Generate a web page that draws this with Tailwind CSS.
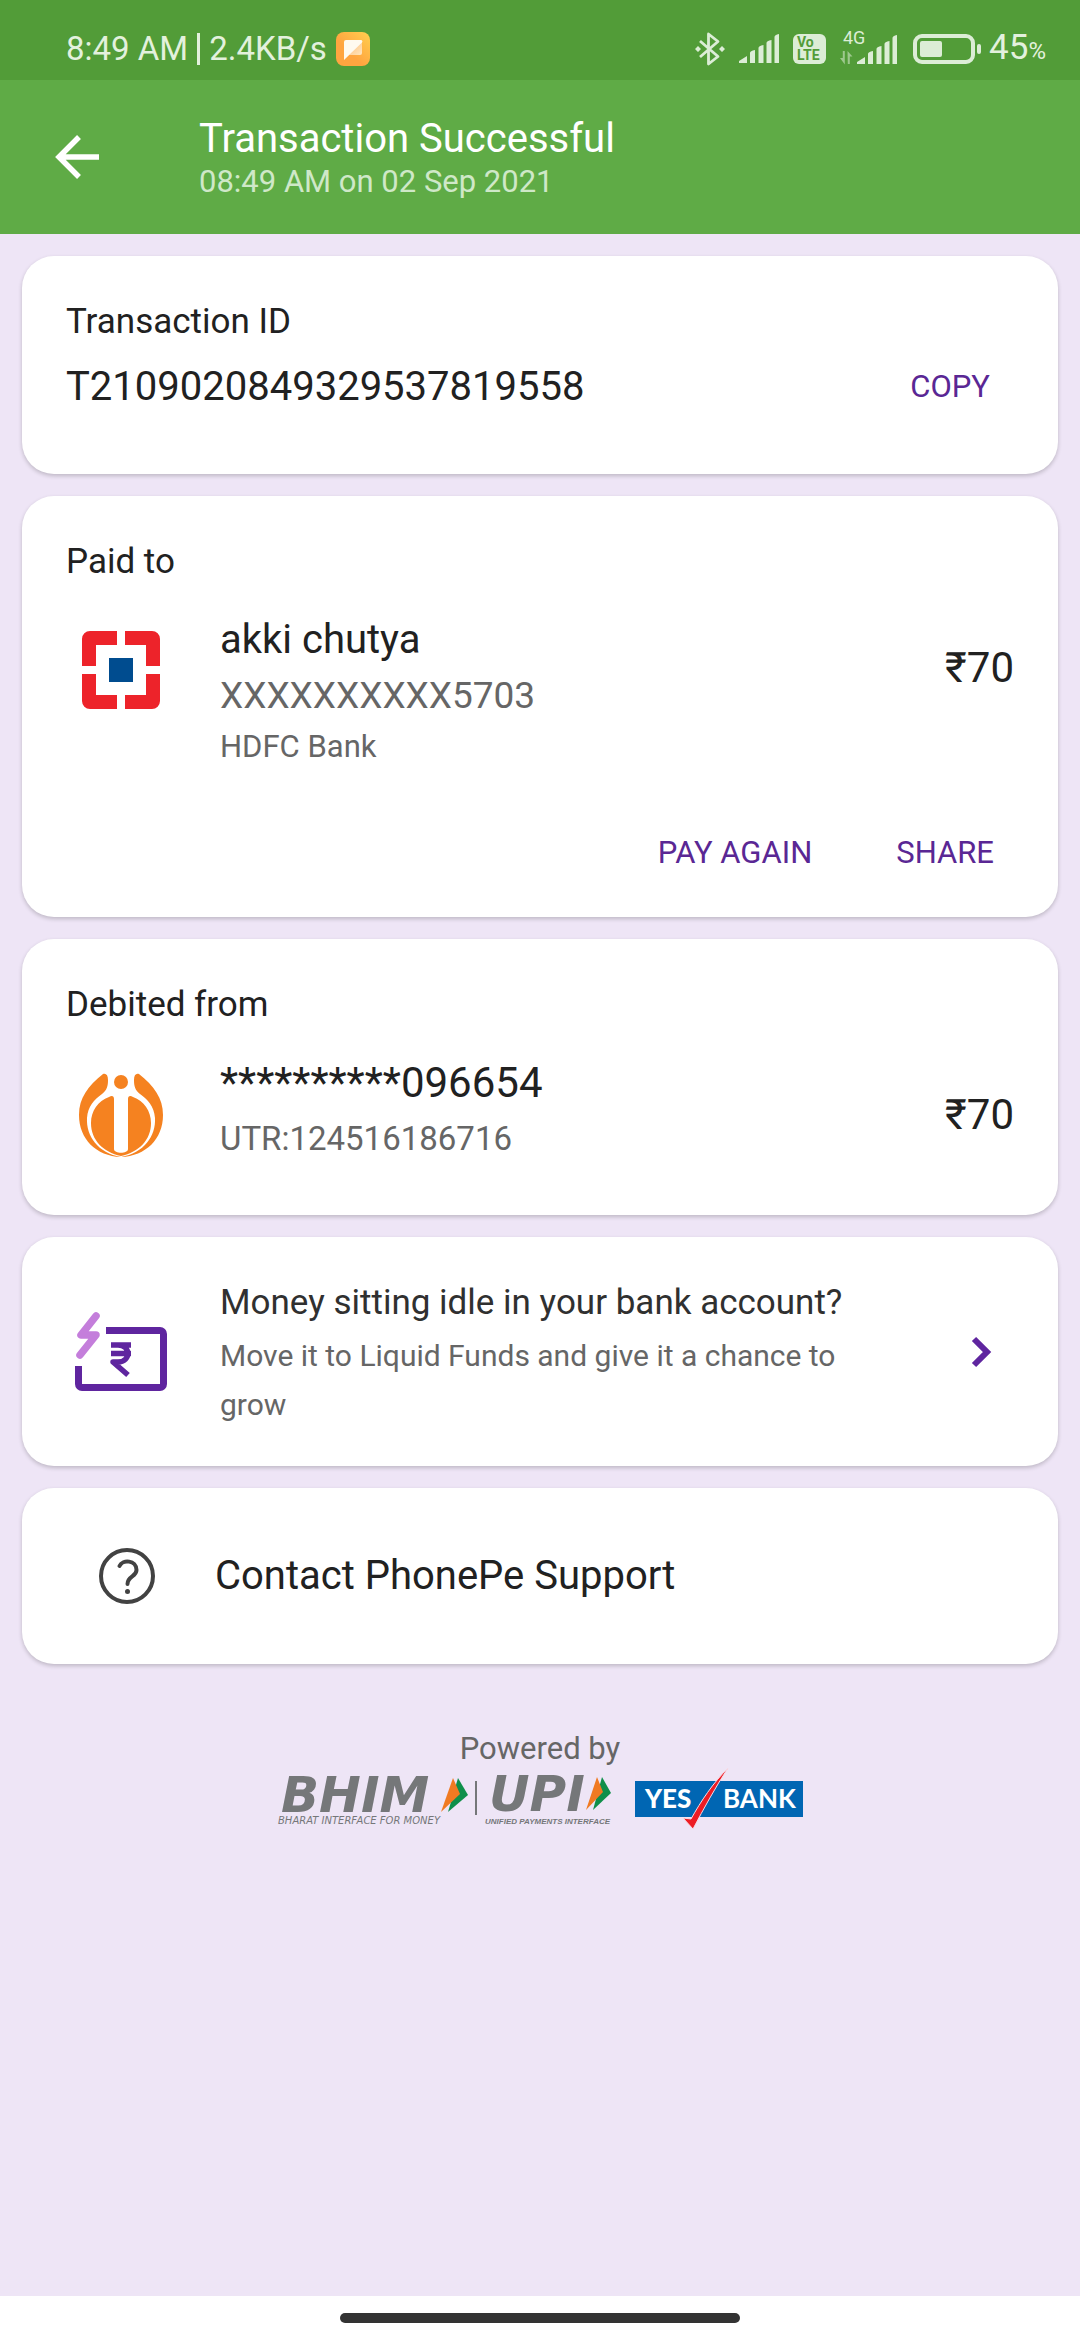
<!DOCTYPE html>
<html lang="en">
<head>
<meta charset="utf-8">
<meta name="viewport" content="width=device-width, initial-scale=1">
<title>Transaction Successful</title>
<script src="https://cdn.jsdelivr.net/npm/@tailwindcss/browser@4"></script>
</head>
<body class="flex min-h-screen flex-col bg-[#eee5f6] font-[Roboto,sans-serif] text-[#212121]">

<!-- System status bar -->
<div class="flex h-20 items-center justify-between bg-[#529c38] pt-[18px] pr-[34px] pl-[66px] text-[#e3f1dd]">
  <div class="flex items-center gap-[9px] text-[33px] leading-[44px]">
    <span>8:49 AM</span>
    <span class="h-8 w-[3px] bg-[#e3f1dd]"></span>
    <span>2.4KB/s</span>
    <svg class="h-[34px] w-[34px]" viewBox="0 0 34 34" aria-hidden="true">
      <defs>
        <linearGradient id="note" x1="1" y1="0" x2="0.4" y2="0.6"><stop offset="0" stop-color="#ffd04f"/><stop offset="1" stop-color="#ffa540"/></linearGradient>
        <linearGradient id="fold" x1="0" y1="0" x2="1" y2="1"><stop offset="0.3" stop-color="#ffc98c"/><stop offset="1" stop-color="#ffe6c0"/></linearGradient>
      </defs>
      <rect width="34" height="34" rx="8" fill="url(#note)"/>
      <path d="M26 9v12a2 2 0 0 1-2 2H13z" fill="url(#fold)"/>
      <path d="M8 28V10a2 2 0 0 1 2-2h15a1.500 1.500 0 0 1 1 2.500z" fill="#fffaf0"/>
    </svg>
  </div>
  <div class="flex items-center">
    <svg class="h-[34px] w-[30px]" viewBox="0 0 30 34" fill="none" stroke="#dcedd6" stroke-width="2.800" aria-hidden="true">
      <path d="M5 9l18 15.500L13.500 32V2L23 9.500 5 25" stroke-linejoin="round"/>
      <path d="M0 17l3-3 3 3-3 3zM24 17l3-3 3 3-3 3z" fill="#dcedd6" stroke="none"/>
    </svg>
    <svg class="ml-3.5 h-[30px] w-10" viewBox="0 0 40 30" fill="#dcedd6" aria-hidden="true">
      <path d="M0 29v-2l8-5v7zM11 29V19q0-2 5-3v13zM19.500 29V14q0-2 5-3v18zM27.500 29V9q0-2 5-3v23zM35.500 29V3q0-2 4.500-3v29z"/>
    </svg>
    <svg class="ml-3.5 h-[30px] w-[33px]" viewBox="0 0 33 30" aria-label="VoLTE">
      <rect width="33" height="30" rx="6" fill="#dcedd6"/>
      <g fill="#529c38" font-family="Roboto, sans-serif" font-weight="700"><text x="4" y="13" font-size="14">Vo</text><text x="4" y="26" font-size="14">LTE</text></g>
    </svg>
    <svg class="ml-3.5 h-[34px] w-[57px] overflow-visible" viewBox="0 0 57 34" fill="#dcedd6" aria-label="4G signal">
      <text x="3" y="12" font-size="18" font-family="Roboto, sans-serif">4G</text>
      <path d="M0 26h2.800v-7h2v13.500zM7.500 19l5 5.500H9.800V32h-2z" opacity="0.55"/>
      <path d="M17 32v-2l8-5v7zM28 32V22q0-2 5-3v13zM36.500 32V17q0-2 5-3v18zM44.500 32V12q0-2 5-3v23zM52.500 32V6q0-2 4.500-3v29z"/>
    </svg>
    <svg class="ml-4 h-[30px] w-[68px]" viewBox="0 0 68 30" aria-label="Battery">
      <rect x="2" y="2" width="58" height="26" rx="7" fill="none" stroke="#dcedd6" stroke-width="4"/>
      <rect x="7" y="7" width="22" height="16" rx="2" fill="#dcedd6"/>
      <rect x="64" y="10" width="4" height="10" rx="2" fill="#dcedd6"/>
    </svg>
    <span class="ml-2 text-[35px] leading-[44px]">45<span class="text-[24px]">%</span></span>
  </div>
</div>

<!-- App bar -->
<header class="flex bg-[#5fab46] pt-[35px] pb-[33px] pl-[55px] text-white">
  <button type="button" aria-label="Back" class="mr-[98px] flex h-[86px] items-center">
    <svg class="h-[46px] w-[46px]" viewBox="0 0 46 46" fill="none" stroke="#fff" stroke-width="5.500" aria-hidden="true">
      <path d="M44 22H5M24 2L4 22l20 20"/>
    </svg>
  </button>
  <div>
    <h1 class="text-[40px] leading-[48px]">Transaction Successful</h1>
    <p class="text-[31px] leading-[38px] text-[#cfe8c8]">08:49 AM on 02 Sep 2021</p>
  </div>
</header>

<main class="flex flex-1 flex-col gap-[22px] px-[22px] pt-[22px]">

  <section class="rounded-[32px] bg-white px-11 pt-11 pb-[63px] shadow-[0_2px_4px_rgba(0,0,0,0.2)]">
    <h2 class="text-[35px] leading-[44px]">Transaction ID</h2>
    <div class="mt-[19px] flex items-center justify-between pr-6">
      <p class="text-[40px] leading-[48px]">T2109020849329537819558</p>
      <button type="button" class="text-[31px] leading-[48px] text-[#5a2794]">COPY</button>
    </div>
  </section>

  <section class="rounded-[32px] bg-white px-11 pt-11 pb-10 shadow-[0_2px_4px_rgba(0,0,0,0.2)]">
    <h2 class="text-[35px] leading-[44px]">Paid to</h2>
    <div class="mt-7 flex items-start">
      <svg class="mt-[18px] mr-[59px] ml-[15px] h-20 w-20" viewBox="0 0 80 80" aria-label="HDFC Bank">
        <path d="M9 1h27v14H15v21H1V9a8 8 0 0 1 8-8zM44 1h27a8 8 0 0 1 8 8v27H65V15H44zM1 44h14v21h21v14H9a8 8 0 0 1-8-8zM65 44h14v27a8 8 0 0 1-8 8H44V65h21z" fill="#ed232a"/>
        <rect x="28" y="28" width="24" height="24" fill="#004c8f"/>
      </svg>
      <div class="flex-1">
        <p class="text-[40px] leading-[56px]">akki chutya</p>
        <p class="text-[37px] leading-[56px] text-[#666666]">XXXXXXXXXX5703</p>
        <p class="text-[31px] leading-[46px] text-[#666666]">HDFC Bank</p>
      </div>
      <p class="mt-7 text-[42px] leading-[56px]">₹70</p>
    </div>
    <div class="mt-[59px] flex justify-end gap-[84px] pr-5 text-[31px] leading-[48px] text-[#5a2794]">
      <button type="button">PAY AGAIN</button>
      <button type="button">SHARE</button>
    </div>
  </section>

  <section class="rounded-[32px] bg-white px-11 pt-11 pb-12 shadow-[0_2px_4px_rgba(0,0,0,0.2)]">
    <h2 class="text-[35px] leading-[44px]">Debited from</h2>
    <div class="mt-7 flex items-start">
      <svg class="mt-[18px] mr-[57px] ml-[13px] h-[84px] w-[84px]" viewBox="0 0 84 84" fill="#f58220" aria-label="IDBI Bank">
        <circle cx="42" cy="9" r="7"/>
        <path d="M24 1C9 13 0 25 0 42c0 24 17 41 42 42C19 80 7 63 8 45c1-12 7-18 15-24 5-4 6-8 6-14 0-5-2-7-5-6z"/>
        <path d="M60 1c15 12 24 24 24 41 0 24-17 41-42 42 23-4 35-21 34-39-1-12-7-18-15-24-5-4-6-8-6-14 0-5 2-7 5-6z"/>
        <path d="M35 26c0-3-2-4-5-2C19 28 12 38 12 50c0 17 12 29 30 33 18-4 30-16 30-33 0-12-7-22-18-26-3-2-5-1-5 2v50c0 5-14 5-14 0z"/>
      </svg>
      <div class="flex-1">
        <p class="text-[42px] leading-[56px]">**********096654</p>
        <p class="text-[33px] leading-[56px] text-[#666666]">UTR:124516186716</p>
      </div>
      <p class="mt-8 text-[42px] leading-[56px]">₹70</p>
    </div>
  </section>

  <a href="#liquid-funds" class="flex items-center rounded-[32px] bg-white pt-[38px] pr-[66px] pb-[37px] pl-[53px] shadow-[0_2px_4px_rgba(0,0,0,0.2)]">
    <svg class="mr-[53px] h-20 w-[92px] shrink-0" viewBox="0 0 92 80" fill="none" stroke-linejoin="round" aria-hidden="true">
      <path d="M3.500 54v18a3.500 3.500 0 0 0 3.500 3.500h78a3.500 3.500 0 0 0 3.500-3.500V22a3.500 3.500 0 0 0-3.500-3.500H31" stroke="#5f259f" stroke-width="7"/>
      <path d="M21 4L6 23h15L5 43" stroke="#c47edb" stroke-width="7.500" stroke-linecap="round"/>
      <path d="M36 33h20M36 41.500h20M36 33h7c13 0 13 17 0 17h-5l15 13" stroke="#5f259f" stroke-width="5.500"/>
    </svg>
    <span class="mr-auto max-w-[640px]">
      <span class="block text-[35px] leading-[56px] text-[#303030]">Money sitting idle in your bank account?</span>
      <span class="block text-[30px] leading-[49px] text-[#666666]">Move it to Liquid Funds and give it a chance to grow</span>
    </span>
    <svg class="h-8 w-[22px] shrink-0" viewBox="0 0 22 32" fill="none" stroke="#5f259f" stroke-width="6" aria-hidden="true"><path d="M4 3l13 13L4 29"/></svg>
  </a>

  <a href="#support" class="flex items-center rounded-[32px] bg-white py-[60px] pl-[77px] shadow-[0_2px_4px_rgba(0,0,0,0.2)]">
    <svg class="mr-[60px] h-14 w-14" viewBox="0 0 56 56" fill="none" stroke="#424242" stroke-width="4" aria-hidden="true">
      <circle cx="28" cy="28" r="26"/>
      <path d="M20.500 18c3-7 17-6 17 4 0 7-9 6-9 14" stroke-linecap="round"/>
      <circle cx="28.500" cy="43.500" r="2.500" fill="#424242" stroke="none"/>
    </svg>
    <span class="text-[40px] leading-[56px]">Contact PhonePe Support</span>
  </a>

  <footer class="flex flex-col items-center pt-11">
    <p class="text-[31px] leading-[38px] text-[#666666]">Powered by</p>
    <div class="flex gap-[22px]">
      <svg class="h-[62px] w-[336px] overflow-visible" viewBox="0 0 336 62" fill="#757779" aria-label="BHIM UPI">
        <g font-family="'DejaVu Sans', sans-serif" font-weight="700" font-style="italic">
          <text x="4" y="44" font-size="50">BHIM</text>
          <text x="212" y="43" font-size="50">UPI</text>
        </g>
        <g font-family="'DejaVu Sans', sans-serif" font-style="italic">
          <text x="1" y="56" font-size="10">BHARAT INTERFACE FOR MONEY</text>
        </g>
        <text x="208" y="56" font-size="8" font-family="'Liberation Sans', sans-serif" font-weight="700" font-style="italic">UNIFIED PAYMENTS INTERFACE</text>
        <path d="M181 10l10 17-20 17z" fill="#0f8f4a"/>
        <path d="M176 10l7 16-19 18z" fill="#f07a22"/>
        <rect x="198" y="13" width="2" height="34"/>
        <path d="M325 9l9 16-18 17z" fill="#0f8f4a"/>
        <path d="M320 9l6 15-17 18z" fill="#f07a22"/>
      </svg>
      <svg class="h-[62px] w-[168px]" viewBox="0 0 168 62" aria-label="YES BANK">
        <rect y="13" width="168" height="36" fill="#0066b3"/>
        <g fill="#fff" font-family="Lato, sans-serif"><text x="10" y="40" font-size="26" font-weight="900">YES</text><text x="88" y="40" font-size="26" font-weight="700">BANK</text></g>
        <path d="M93 0C80 20 69 40 58 61L48 50l8 1C66 33 78 15 93 0z" fill="#ed1c24" stroke="#f6dbe6" stroke-width="1"/>
      </svg>
    </div>
  </footer>
</main>

<!-- Gesture navigation area -->
<div class="flex h-11 justify-center bg-white pt-[17px]">
  <div class="h-2.5 w-[37%] rounded-full bg-[#333333]"></div>
</div>
</body>
</html>
